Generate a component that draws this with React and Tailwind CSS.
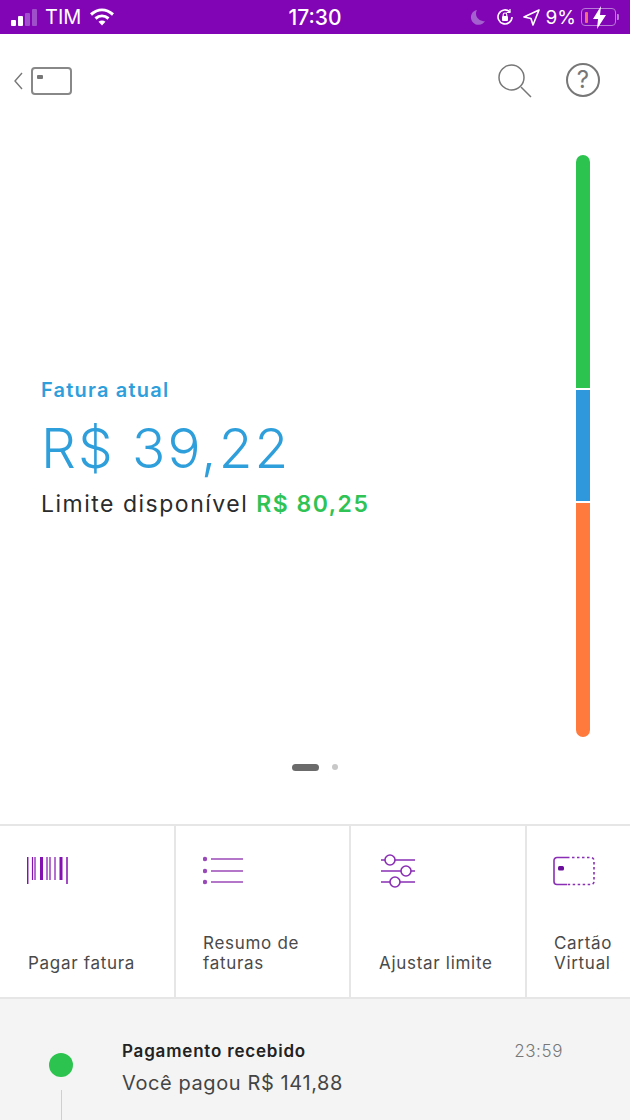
import React from "react";

const font = { sans: "font-['Inter','Liberation_Sans',sans-serif]" };

const Barcode = () => (
  <svg className="-ml-[1px]" width="42" height="30" viewBox="0 0 42 30" fill="none" stroke="#8412b0">
    <path d="M0.700 1v27M40 1v27" strokeWidth="1.5" />
    <path d="M5.500 1v23M8 1v23M20 1v23M23 1v23M28 1v23" strokeWidth="1.200" />
    <path d="M14.500 1v23M34 1v23" strokeWidth="3" />
  </svg>
);

const ListIcon = () => (
  <svg width="42" height="30" viewBox="0 0 42 30" fill="none" stroke="#9a4ab8" strokeWidth="1.6">
    <circle cx="2" cy="3" r="2.200" fill="#9a4ab8" stroke="none" />
    <circle cx="2" cy="15" r="2.200" fill="#9a4ab8" stroke="none" />
    <circle cx="2" cy="26" r="2.200" fill="#9a4ab8" stroke="none" />
    <path d="M8 3h32M8 15h32M8 26h32" />
  </svg>
);

const Sliders = () => (
  <svg className="ml-[1px] -mt-[3px]" width="36" height="36" viewBox="0 0 36 36" fill="none" stroke="#8a2fb5" strokeWidth="1.6">
    <path d="M1 7h4M15 7h20M1 18h20M31 18h4M1 29h9M20 29h15" />
    <circle cx="10" cy="7" r="5" />
    <circle cx="26" cy="18" r="5" />
    <circle cx="15" cy="29" r="5" />
  </svg>
);

const VirtualCard = () => (
  <svg className="-ml-[1px]" width="42" height="30" viewBox="0 0 42 30" fill="none" stroke="#8a2fb5" strokeWidth="1.6">
    <path d="M14 1.500H4a3 3 0 0 0-3 3v21a3 3 0 0 0 3 3h10" />
    <path d="M14 1.500h24a3 3 0 0 1 3 3v21a3 3 0 0 1-3 3H14" strokeDasharray="2.500 2.500" />
    <rect x="5" y="10" width="6" height="4.500" rx="1.500" fill="#6a0d9a" stroke="none" />
  </svg>
);

const actions = [
  { icon: <Barcode />, label: ["Pagar fatura"], w: "w-[176px]", pl: "pl-[28px]" },
  { icon: <ListIcon />, label: ["Resumo de", "faturas"], w: "w-[175px]", pl: "pl-[27px]" },
  { icon: <Sliders />, label: ["Ajustar limite"], w: "w-[176px]", pl: "pl-[28px]" },
  { icon: <VirtualCard />, label: ["Cartão", "Virtual"], w: "w-[103px]", pl: "pl-[27px]" },
];

const StatusBar = () => (
  <div className="h-[34px] bg-[#8205b5] flex items-center justify-between pl-[11px] pr-[11px] text-white">
    <div className="flex items-center w-[200px]">
      <div className="flex items-end gap-[2px] h-[17px]">
        <span className="w-[5px] h-[6px] bg-white rounded-[1px]" />
        <span className="w-[5px] h-[10px] bg-white rounded-[1px]" />
        <span className="w-[5px] h-[13px] bg-[#a04fcb] rounded-[1px]" />
        <span className="w-[5px] h-[17px] bg-[#a04fcb] rounded-[1px]" />
      </div>
      <span className="ml-[8px] text-[20px] leading-none">TIM</span>
      <svg className="ml-[8px]" width="26" height="18" viewBox="0 0 26 18" fill="none" stroke="white" strokeWidth="3">
        <path d="M2 6.500C9 0.500 17 0.500 24 6.500" />
        <path d="M6.500 10.500C10.500 7 15.500 7 19.500 10.500" />
        <path d="M13 17.500l-3.500-3.700c2-1.600 5-1.600 7 0z" fill="white" stroke="none" />
      </svg>
    </div>
    <span className="text-[21px] leading-none font-medium">17:30</span>
    <div className="flex items-center justify-end w-[200px]">
      <svg width="16" height="16" viewBox="0 0 16 16">
        <path d="M7 1a7.500 7.500 0 0 0 8 11A7.500 7.500 0 1 1 7 1z" fill="#a560cf" />
      </svg>
      <svg className="ml-[10px]" width="18" height="18" viewBox="0 0 18 18" fill="none" stroke="white" strokeWidth="1.600">
        <path d="M16 9a7 7 0 1 1-2-5" />
        <path d="M14 1v3.500h-3.500" strokeWidth="1.200" />
        <rect x="6" y="8" width="6" height="5" rx="1" fill="white" stroke="none" />
        <path d="M7.200 8V6.800a1.800 1.800 0 0 1 3.600 0V8" strokeWidth="1.200" />
      </svg>
      <svg className="ml-[9px]" width="17" height="17" viewBox="0 0 17 17" fill="none" stroke="white" strokeWidth="1.600">
        <path d="M16 1L1 8l7 1.500L10 16z" strokeLinejoin="round" />
      </svg>
      <span className="ml-[6px] text-[19px] leading-none">9%</span>
      <div className="ml-[5px] relative w-[35px] h-[18px] rounded-[4px] border border-[#b87ad6] flex items-center pl-[3px]">
        <span className="w-[3px] h-[11px] bg-[#f0707a] rounded-[1px]" />
        <svg className="absolute left-[11px] -top-[3px]" width="13" height="23" viewBox="0 0 13 23">
          <path d="M8 0L0 13h5l-1 10 9-14H7z" fill="white" />
        </svg>
      </div>
      <span className="ml-[1px] w-[2px] h-[6px] bg-[#b87ad6] rounded-r-[1px]" />
    </div>
  </div>
);

const Header = () => (
  <div className="h-[86px] flex justify-between pl-[14px] pr-[30px] pt-[29px]">
    <div className="flex items-center h-[36px]">
      <svg width="9" height="18" viewBox="0 0 9 18" fill="none" stroke="#777" strokeWidth="1.400">
        <path d="M8 1L1 9l7 8" />
      </svg>
      <div className="ml-[8px] w-[41px] h-[28px] rounded-[4px] border-2 border-[#888] relative">
        <span className="absolute left-[4px] top-[6px] w-[6px] h-[4px] rounded-[1px] bg-[#777]" />
      </div>
    </div>
    <div className="flex items-start gap-[33px]">
      <svg width="36" height="36" viewBox="0 0 36 36" fill="none" stroke="#777" strokeWidth="1.500">
        <circle cx="14.500" cy="14.500" r="12.500" />
        <path d="M24 24l10 10" />
      </svg>
      <div className="w-[34px] h-[34px] rounded-full border-2 border-[#777] flex items-center justify-center text-[#777] text-[24px] font-normal leading-none">
        ?
      </div>
    </div>
  </div>
);

const Hero = () => (
  <div className={`flex-1 flex justify-between pl-[41px] pr-[40px] pt-[35px] ${font.sans}`}>
    <div className="pt-[223px]">
      <div className="text-[20px] leading-[24px] font-semibold text-[#2f9fdc] tracking-[1.2px]">Fatura atual</div>
      <div className="mt-[16px] text-[55px] leading-[60px] font-light text-[#2f9fdc] tracking-[2px] whitespace-nowrap">R$ 39,22</div>
      <div className="mt-[12px] text-[23px] leading-[28px] text-[#2b2b2b] tracking-[1.5px] whitespace-nowrap">
        Limite disponível <span className="font-semibold text-[#2fc355]">R$ 80,25</span>
      </div>
    </div>
    <div className="w-[14px] h-[582px] rounded-full overflow-hidden flex flex-col gap-[2px]">
      <div className="h-[233px] bg-[#2cc44f]" />
      <div className="h-[111px] bg-[#2f98dc]" />
      <div className="flex-1 bg-[#ff7a3c]" />
    </div>
  </div>
);

const Dots = () => (
  <div className="flex justify-center items-center gap-[13px] h-[87px] pb-[27px]">
    <span className="w-[27px] h-[7px] rounded-full bg-[#6b6b6b]" />
    <span className="w-[6px] h-[6px] rounded-full bg-[#c8c8c8]" />
  </div>
);

const Actions = () => (
  <div className={`h-[175px] flex border-y-2 border-[#e6e6e6] ${font.sans}`}>
    {actions.map((a, i) => (
      <div
        key={i}
        className={`${a.w} ${a.pl} shrink-0 flex flex-col justify-between pt-[30px] pb-[24px] ${i < 3 ? "border-r-2 border-[#e6e6e6]" : ""}`}
      >
        <div className="h-[32px]">{a.icon}</div>
        <div className="text-[17px] leading-[20px] tracking-[0.7px] text-[#4a4a4a] whitespace-nowrap">
          {a.label.map((l) => (
            <div key={l}>{l}</div>
          ))}
        </div>
      </div>
    ))}
  </div>
);

const Timeline = () => (
  <div className={`flex-1 bg-[#f4f4f4] flex pl-[49px] pr-[67px] pt-[42px] ${font.sans}`}>
    <div className="w-[24px] flex flex-col items-center pt-[12px]">
      <span className="w-[24px] h-[24px] rounded-full bg-[#2cc44f]" />
      <span className="mt-[13px] w-[1px] flex-1 bg-[#cfcfcf]" />
    </div>
    <div className="ml-[49px] flex-1">
      <div className="flex justify-between items-center">
        <span className="text-[17px] leading-[20px] font-semibold tracking-[0.8px] text-[#222]">Pagamento recebido</span>
        <span className="text-[17px] leading-[20px] font-light tracking-[0.6px] text-[#777]">23:59</span>
      </div>
      <div className="mt-[10px] text-[20px] leading-[24px] tracking-[0.6px] text-[#444]">Você pagou R$ 141,88</div>
    </div>
  </div>
);

export default function App() {
  return (
    <div className={`w-[630px] h-[1120px] bg-white flex flex-col overflow-hidden ${font.sans}`}>
      <StatusBar />
      <Header />
      <Hero />
      <Dots />
      <Actions />
      <Timeline />
    </div>
  );
}
